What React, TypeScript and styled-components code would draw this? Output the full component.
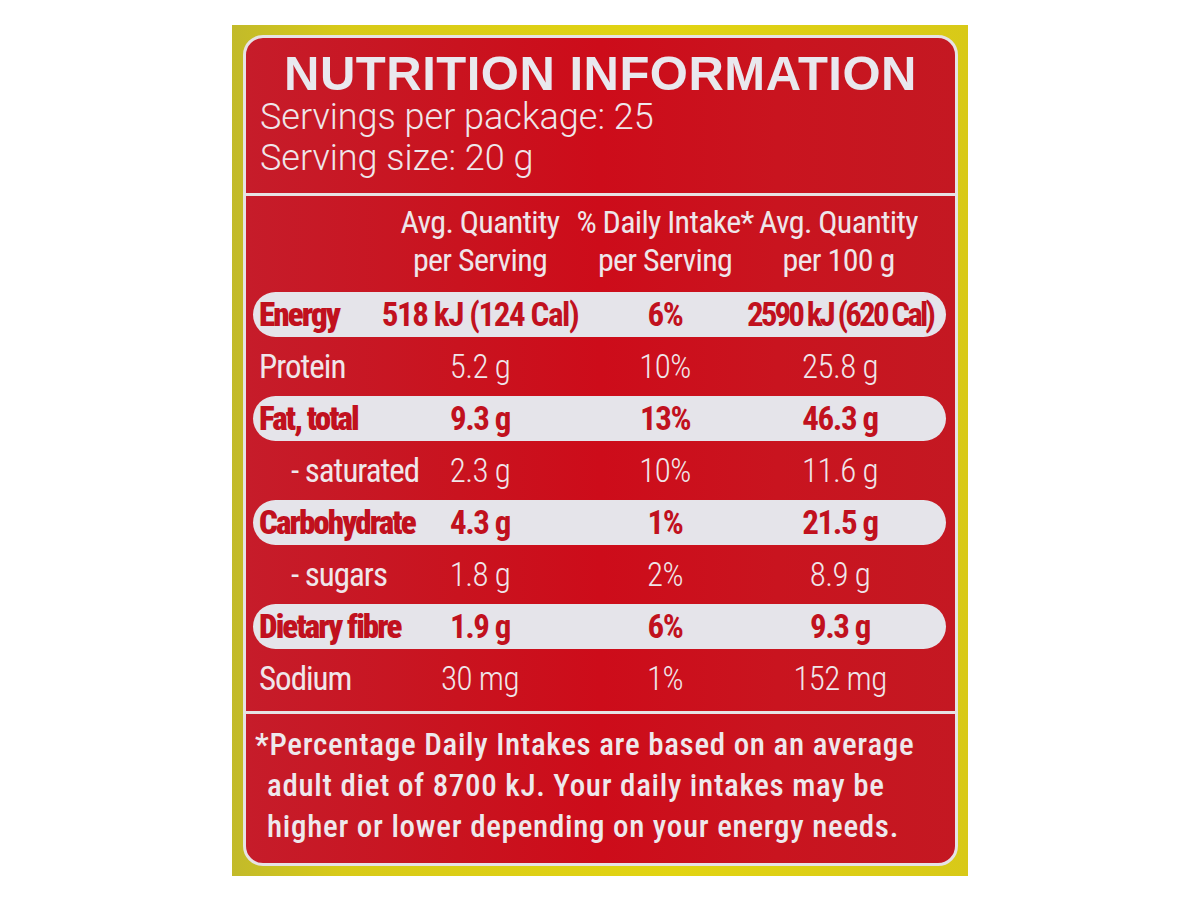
import React from "react";
import styled, { createGlobalStyle } from "styled-components";

const GlobalStyle = createGlobalStyle`
  html, body { margin: 0; padding: 0; background: #ffffff; }
  * { box-sizing: border-box; }
`;

const Page = styled.div`
  height: 900px;
  display: flex;
  align-items: center;
  justify-content: center;
`;

const Frame = styled.div`
  width: 736px;
  height: 851px;
  padding: 10px 10px 10px 11px;
  background: linear-gradient(90deg, #c2ba2a 0%, #d8ca18 15%, #e2d412 60%, #d8c918 100%);
`;

const Panel = styled.div`
  height: 100%;
  display: flex;
  flex-direction: column;
  border: 3px solid #e6e2e4;
  border-radius: 20px;
  overflow: hidden;
  background: linear-gradient(
    90deg,
    #c61c2a 0%,
    #c9131f 30%,
    #cd0c1a 50%,
    #c9141f 75%,
    #c41822 100%
  );
  color: #ede7eb;
`;

const Header = styled.div`
  padding: 10px 14px 14px 14px;
`;

const Title = styled.h1`
  margin: 0;
  text-align: center;
  font-family: "Liberation Sans", Arial, sans-serif;
  font-weight: 700;
  font-size: 49px;
  line-height: 50px;
  letter-spacing: 0.5px;
  color: #e9e8ee;
`;

const ServingLine = styled.div`
  font-family: Roboto, "Liberation Sans", sans-serif;
  font-weight: 300;
  font-size: 36px;
  line-height: 41px;
  color: #efe6ea;
  &:first-of-type {
    margin-top: -1px;
  }
`;

const Table = styled.div`
  border-top: 3px solid #e6e2e4;
  padding: 7px 9px 6px 7px;
  font-family: Roboto, "Liberation Sans Narrow", sans-serif;
  font-stretch: 75%;
`;

const Grid = styled.div`
  display: grid;
  grid-template-columns: 137px 180px 190px 160px 1fr;
  align-items: center;
`;

const HeadRow = styled(Grid)`
  padding-bottom: 10px;
`;

const HeadCell = styled.div<{ $shift?: number }>`
  display: flex;
  flex-direction: column;
  align-items: center;
  margin-left: ${(p) => p.$shift || 0}px;
  font-size: 32px;
  line-height: 38px;
  font-weight: 400;
  letter-spacing: -0.7px;
  white-space: nowrap;
  color: #eee6ea;
`;

const Row = styled.div`
  height: 52px;
  padding: 3.5px 0;
`;

const RowBody = styled(Grid)<{ $hl: boolean }>`
  height: 45px;
  border-radius: 23px;
  background: ${(p) => (p.$hl ? "#e5e4ea" : "transparent")};
  color: ${(p) => (p.$hl ? "#c1111e" : "#efe6ea")};
  font-size: 33px;
  white-space: nowrap;
`;

const Label = styled.div<{ $hl: boolean; $indent: boolean }>`
  padding-left: ${(p) => (p.$indent ? 38 : 6)}px;
  font-weight: ${(p) => (p.$hl ? 900 : 400)};
  letter-spacing: ${(p) => (p.$hl ? -1.9 : -1)}px;
  white-space: nowrap;
`;

const Value = styled.div<{ $hl: boolean; $tight?: boolean }>`
  display: flex;
  justify-content: center;
  font-weight: ${(p) => (p.$hl ? 700 : 300)};
  letter-spacing: ${(p) => (p.$tight ? -2.9 : p.$hl ? -1.4 : -0.6)}px;
`;

const Footnote = styled.div`
  flex: 1;
  border-top: 3px solid #e6e2e4;
  padding: 10px 10px 0 21px;
  text-indent: -12px;
  font-family: Roboto, "Liberation Sans", sans-serif;
  font-stretch: 87.5%;
  font-weight: 500;
  font-size: 31px;
  line-height: 41px;
  letter-spacing: 0.7px;
  color: #eee8ec;
  white-space: nowrap;
`;

type NRow = {
  label: string;
  a: string;
  b: string;
  c: string;
  hl?: boolean;
  indent?: boolean;
  tight?: boolean;
};

const rows: NRow[] = [
  { label: "Energy", a: "518 kJ (124 Cal)", b: "6%", c: "2590 kJ (620 Cal)", hl: true, tight: true },
  { label: "Protein", a: "5.2 g", b: "10%", c: "25.8 g" },
  { label: "Fat, total", a: "9.3 g", b: "13%", c: "46.3 g", hl: true },
  { label: "- saturated", a: "2.3 g", b: "10%", c: "11.6 g", indent: true },
  { label: "Carbohydrate", a: "4.3 g", b: "1%", c: "21.5 g", hl: true },
  { label: "- sugars", a: "1.8 g", b: "2%", c: "8.9 g", indent: true },
  { label: "Dietary fibre", a: "1.9 g", b: "6%", c: "9.3 g", hl: true },
  { label: "Sodium", a: "30 mg", b: "1%", c: "152 mg" },
];

export default function App() {
  return (
    <>
      <GlobalStyle />
      <Page>
        <Frame>
          <Panel>
            <Header>
              <Title>NUTRITION INFORMATION</Title>
              <ServingLine>Servings per package: 25</ServingLine>
              <ServingLine>Serving size: 20 g</ServingLine>
            </Header>
            <Table>
              <HeadRow>
                <div />
                <HeadCell>
                  <span>Avg. Quantity</span>
                  <span>per Serving</span>
                </HeadCell>
                <HeadCell>
                  <span>% Daily Intake*</span>
                  <span>per Serving</span>
                </HeadCell>
                <HeadCell $shift={-3}>
                  <span>Avg. Quantity</span>
                  <span>per 100 g</span>
                </HeadCell>
              </HeadRow>
              {rows.map((r) => (
                <Row key={r.label}>
                  <RowBody $hl={!!r.hl}>
                    <Label $hl={!!r.hl} $indent={!!r.indent}>
                      {r.label}
                    </Label>
                    <Value $hl={!!r.hl}>{r.a}</Value>
                    <Value $hl={!!r.hl}>{r.b}</Value>
                    <Value $hl={!!r.hl} $tight={r.tight}>
                      {r.c}
                    </Value>
                  </RowBody>
                </Row>
              ))}
            </Table>
            <Footnote>
              *Percentage Daily Intakes are based on an average
              <br />
              adult diet of 8700 kJ. Your daily intakes may be
              <br />
              higher or lower depending on your energy needs.
            </Footnote>
          </Panel>
        </Frame>
      </Page>
    </>
  );
}
